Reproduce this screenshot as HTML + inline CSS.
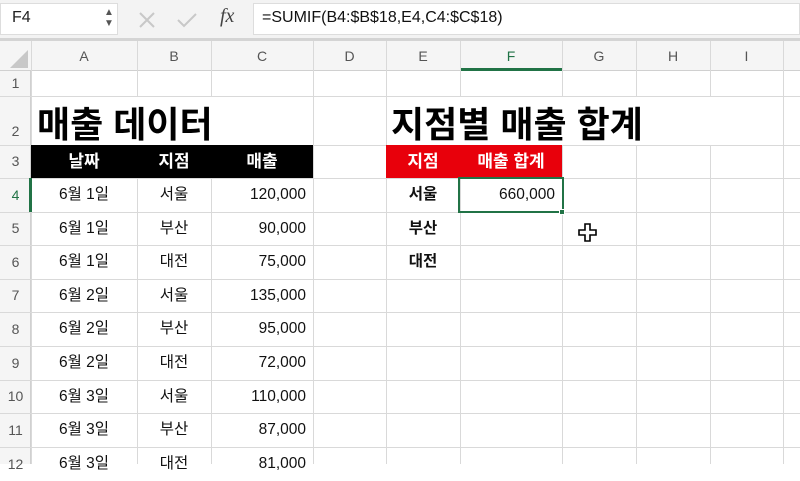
<!DOCTYPE html><html><head><meta charset="utf-8"><style>
body{margin:0;width:800px;height:464px;overflow:hidden;background:#fff;font-family:"Liberation Sans","Noto Sans CJK KR",sans-serif;position:relative}
.a{position:absolute;box-sizing:border-box}
.vl{position:absolute;top:41px;bottom:0;width:1px;background:#d9d9d9}
.hl{position:absolute;left:0;right:0;height:1px;background:#d9d9d9}
.ch{position:absolute;top:41px;height:30px;line-height:30px;text-align:center;color:#555;font-size:14px}
.rh{position:absolute;left:0;width:31px;text-align:center;color:#555;font-size:14px}
.t{position:absolute;font-size:15.5px;color:#111;line-height:33px;white-space:nowrap}
.hd{color:#fff;font-weight:bold;font-size:17px}
</style></head><body>
<div class="a" style="left:0;top:0;width:800px;height:38px;background:#f3f3f3"></div>
<div class="a" style="left:0;top:3px;width:118px;height:32px;background:#fff;border:1px solid #ddd"></div>
<div class="a" style="left:12px;top:9px;font-size:16px;color:#222">F4</div>
<div class="a" style="left:104px;top:7px;font-size:10px;color:#555;line-height:11px">▲<br>▼</div>
<svg class="a" style="left:138px;top:11px" width="18" height="18"><path d="M2 2L16 16M16 2L2 16" stroke="#c8c8c8" stroke-width="2"/></svg>
<svg class="a" style="left:176px;top:11px" width="22" height="18"><path d="M2 9L8 15L20 3" stroke="#c8c8c8" stroke-width="2" fill="none"/></svg>
<div class="a" style="left:220px;top:5px;font-size:20px;font-style:italic;font-family:'Liberation Serif',serif;color:#444">fx</div>
<div class="a" style="left:253px;top:3px;width:547px;height:32px;background:#fff;border:1px solid #ddd"></div>
<div class="a" style="left:262px;top:9px;font-size:16px;color:#111">=SUMIF(B4:$B$18,E4,C4:$C$18)</div>
<div class="a" style="left:0;top:38px;width:800px;height:3px;background:#d4d4d4"></div>
<div class="a" style="left:0;top:41px;width:800px;height:30px;background:#f5f5f5;border-bottom:1px solid #d0d0d0"></div>
<div class="a" style="left:0;top:71px;width:31px;height:393px;background:#f5f5f5;border-right:1px solid #d0d0d0"></div>
<svg class="a" style="left:8px;top:50px" width="20" height="18"><polygon points="20,0 20,18 2,18" fill="#c8c8c8"/></svg>
<div class="a" style="left:460px;top:68px;width:102px;height:3px;background:#217346"></div>
<div class="ch" style="left:31px;width:106px">A</div><div class="ch" style="left:137px;width:74px">B</div><div class="ch" style="left:211px;width:102px">C</div><div class="ch" style="left:313px;width:73px">D</div><div class="ch" style="left:386px;width:74px">E</div><div class="ch" style="left:460px;width:102px;color:#217346">F</div><div class="ch" style="left:562px;width:74px">G</div><div class="ch" style="left:636px;width:74px">H</div><div class="ch" style="left:710px;width:73px">I</div>
<div class="vl" style="left:31px"></div><div class="vl" style="left:137px"></div><div class="vl" style="left:211px"></div><div class="vl" style="left:313px"></div><div class="vl" style="left:386px"></div><div class="vl" style="left:460px"></div><div class="vl" style="left:562px"></div><div class="vl" style="left:636px"></div><div class="vl" style="left:710px"></div><div class="vl" style="left:783px"></div>
<div class="hl" style="top:96px"></div><div class="hl" style="top:145px"></div><div class="hl" style="top:178px"></div><div class="hl" style="top:212px"></div><div class="hl" style="top:245px"></div><div class="hl" style="top:279px"></div><div class="hl" style="top:312px"></div><div class="hl" style="top:346px"></div><div class="hl" style="top:380px"></div><div class="hl" style="top:413px"></div><div class="hl" style="top:447px"></div>
<div class="rh" style="top:71px;line-height:25px">1</div><div class="rh" style="top:96px;line-height:70px">2</div><div class="rh" style="top:145px;line-height:33px">3</div><div class="rh" style="top:178px;line-height:34px;color:#217346">4</div><div class="rh" style="top:212px;line-height:33px">5</div><div class="rh" style="top:245px;line-height:34px">6</div><div class="rh" style="top:279px;line-height:33px">7</div><div class="rh" style="top:312px;line-height:34px">8</div><div class="rh" style="top:346px;line-height:34px">9</div><div class="rh" style="top:380px;line-height:33px">10</div><div class="rh" style="top:413px;line-height:34px">11</div><div class="rh" style="top:447px;line-height:34px">12</div>
<div class="a" style="left:29px;top:178px;width:3px;height:34px;background:#217346"></div>
<div class="a" style="left:32px;top:97px;width:281px;height:48px;background:#fff"></div>
<div class="a" style="left:37px;top:96px;font-size:36px;font-weight:bold;color:#000;white-space:nowrap">매출 데이터</div>
<div class="a" style="left:387px;top:97px;width:396px;height:48px;background:#fff"></div>
<div class="a" style="left:391px;top:96px;font-size:36px;font-weight:bold;color:#000;white-space:nowrap">지점별 매출 합계</div>
<div class="a" style="left:31px;top:145px;width:282px;height:33px;background:#000"></div>
<div class="t hd" style="left:31px;top:145px;width:106px;text-align:center">날짜</div>
<div class="t hd" style="left:137px;top:145px;width:74px;text-align:center">지점</div>
<div class="t hd" style="left:211px;top:145px;width:102px;text-align:center">매출</div>
<div class="a" style="left:386px;top:145px;width:176px;height:33px;background:#e8000b"></div>
<div class="t hd" style="left:386px;top:145px;width:74px;text-align:center">지점</div>
<div class="t hd" style="left:460px;top:145px;width:102px;text-align:center">매출 합계</div>
<div class="t" style="left:31px;top:178px;width:106px;text-align:center">6월 1일</div><div class="t" style="left:137px;top:178px;width:74px;text-align:center">서울</div><div class="t" style="left:211px;top:178px;width:95px;text-align:right">120,000</div>
<div class="t" style="left:31px;top:212px;width:106px;text-align:center">6월 1일</div><div class="t" style="left:137px;top:212px;width:74px;text-align:center">부산</div><div class="t" style="left:211px;top:212px;width:95px;text-align:right">90,000</div>
<div class="t" style="left:31px;top:245px;width:106px;text-align:center">6월 1일</div><div class="t" style="left:137px;top:245px;width:74px;text-align:center">대전</div><div class="t" style="left:211px;top:245px;width:95px;text-align:right">75,000</div>
<div class="t" style="left:31px;top:279px;width:106px;text-align:center">6월 2일</div><div class="t" style="left:137px;top:279px;width:74px;text-align:center">서울</div><div class="t" style="left:211px;top:279px;width:95px;text-align:right">135,000</div>
<div class="t" style="left:31px;top:312px;width:106px;text-align:center">6월 2일</div><div class="t" style="left:137px;top:312px;width:74px;text-align:center">부산</div><div class="t" style="left:211px;top:312px;width:95px;text-align:right">95,000</div>
<div class="t" style="left:31px;top:346px;width:106px;text-align:center">6월 2일</div><div class="t" style="left:137px;top:346px;width:74px;text-align:center">대전</div><div class="t" style="left:211px;top:346px;width:95px;text-align:right">72,000</div>
<div class="t" style="left:31px;top:380px;width:106px;text-align:center">6월 3일</div><div class="t" style="left:137px;top:380px;width:74px;text-align:center">서울</div><div class="t" style="left:211px;top:380px;width:95px;text-align:right">110,000</div>
<div class="t" style="left:31px;top:413px;width:106px;text-align:center">6월 3일</div><div class="t" style="left:137px;top:413px;width:74px;text-align:center">부산</div><div class="t" style="left:211px;top:413px;width:95px;text-align:right">87,000</div>
<div class="t" style="left:31px;top:447px;width:106px;text-align:center">6월 3일</div><div class="t" style="left:137px;top:447px;width:74px;text-align:center">대전</div><div class="t" style="left:211px;top:447px;width:95px;text-align:right">81,000</div>
<div class="t" style="left:386px;top:178px;width:74px;text-align:center;font-weight:bold">서울</div>
<div class="t" style="left:386px;top:212px;width:74px;text-align:center;font-weight:bold">부산</div>
<div class="t" style="left:386px;top:245px;width:74px;text-align:center;font-weight:bold">대전</div>
<div class="a" style="left:458px;top:177px;width:106px;height:36px;border:2px solid #217346"></div>
<div class="a" style="left:559px;top:209px;width:6px;height:6px;background:#217346;border:1px solid #fff"></div>
<div class="t" style="left:460px;top:178px;width:95px;text-align:right">660,000</div>
<svg class="a" style="left:578px;top:223px" width="20" height="20"><path d="M7 1h5v6h6v5h-6v6h-5v-6h-6v-5h6z" fill="#fff" stroke="#000" stroke-width="1.6"/></svg>
</body></html>
